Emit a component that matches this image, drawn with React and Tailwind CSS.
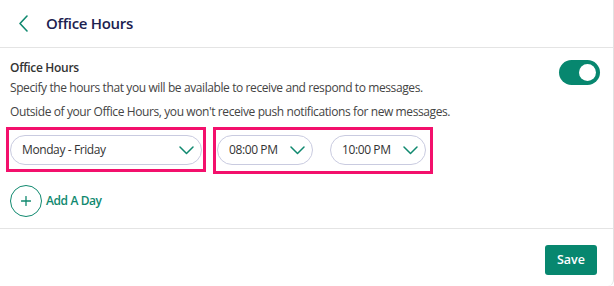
function Chevron() {
  return (
    <svg width="15" height="9" viewBox="0 0 15 9" fill="none" className="shrink-0">
      <polyline points="1,1 7.5,7.5 14,1" stroke="#10896f" strokeWidth="1.5" strokeLinecap="round" strokeLinejoin="round" />
    </svg>
  );
}

function Select({ label, width }) {
  return (
    <div
      className={`${width} h-[30px] rounded-full border border-[#c9cbe0] bg-white flex items-center justify-between pl-[11px] pr-[7px]`}
    >
      <span className="text-[12px] tracking-[-0.4px] text-[#333] whitespace-nowrap">{label}</span>
      <Chevron />
    </div>
  );
}

export default function App() {
  return (
    <div
      className="w-[614px] h-[286px] bg-white border-r border-[#e2e2e2] rounded-br-[6px] flex flex-col"
      style={{ fontFamily: '"Open Sans", sans-serif' }}
    >
      <div className="h-[48px] border-b border-[#e4e4e4] flex items-center pl-[18px] shrink-0">
        <svg width="11" height="17" viewBox="0 0 11 17" fill="none">
          <polyline points="9,1 2,8.5 9,16" stroke="#10896f" strokeWidth="1.6" strokeLinecap="round" strokeLinejoin="round" />
        </svg>
        <h1 className="ml-[17px] text-[15px] font-semibold tracking-[-0.3px] text-[#1c2150]">Office Hours</h1>
      </div>

      <div className="px-[10px] pt-[11px] border-b border-[#e4e4e4] h-[181px] shrink-0">
        <div className="flex justify-between">
          <div>
            <div className="text-[12px] font-semibold tracking-[-0.3px] text-[#333] leading-[18px]">Office Hours</div>
            <p className="mt-[2px] text-[12px] tracking-[-0.4px] text-[#444] leading-[18px]">
              Specify the hours that you will be available to receive and respond to messages.
            </p>
            <p className="mt-[6px] text-[12px] tracking-[-0.4px] text-[#444] leading-[18px]">
              Outside of your Office Hours, you won't receive push notifications for new messages.
            </p>
          </div>
          <div className="mt-[1px] mr-[3px] w-[41px] h-[25px] rounded-full bg-[#07876f] flex items-center justify-end pr-[4px]">
            <div className="w-[17px] h-[17px] rounded-full bg-white" />
          </div>
        </div>

        <div className="mt-[6px] flex items-start gap-[7px] -ml-[4px]">
          <div className="border-[3px] border-[#f3106c] px-[1px] pt-[5px] pb-[4px]">
            <Select label="Monday - Friday" width="w-[192px]" />
          </div>
          <div className="border-[3px] border-[#f3106c] pl-[1px] pr-[4px] pt-[5px] pb-[6px] flex gap-[17px]">
            <Select label="08:00 PM" width="w-[96px]" />
            <Select label="10:00 PM" width="w-[96px]" />
          </div>
        </div>

        <div className="mt-[11px] flex items-center gap-[4px]">
          <div className="w-[32px] h-[32px] rounded-full border border-[#10896f] flex items-center justify-center">
            <svg width="10" height="10" viewBox="0 0 10 10" fill="none">
              <path d="M5 0.5V9.5M0.5 5H9.5" stroke="#10896f" strokeWidth="1.3" strokeLinecap="round" />
            </svg>
          </div>
          <span className="text-[12px] font-semibold tracking-[-0.4px] text-[#10896f]">Add A Day</span>
        </div>
      </div>

      <div className="flex justify-end pr-[16px] pt-[16px]">
        <button className="w-[52px] h-[30px] rounded-[3px] bg-[#07876f] text-white text-[12.5px] font-semibold">
          Save
        </button>
      </div>
    </div>
  );
}
